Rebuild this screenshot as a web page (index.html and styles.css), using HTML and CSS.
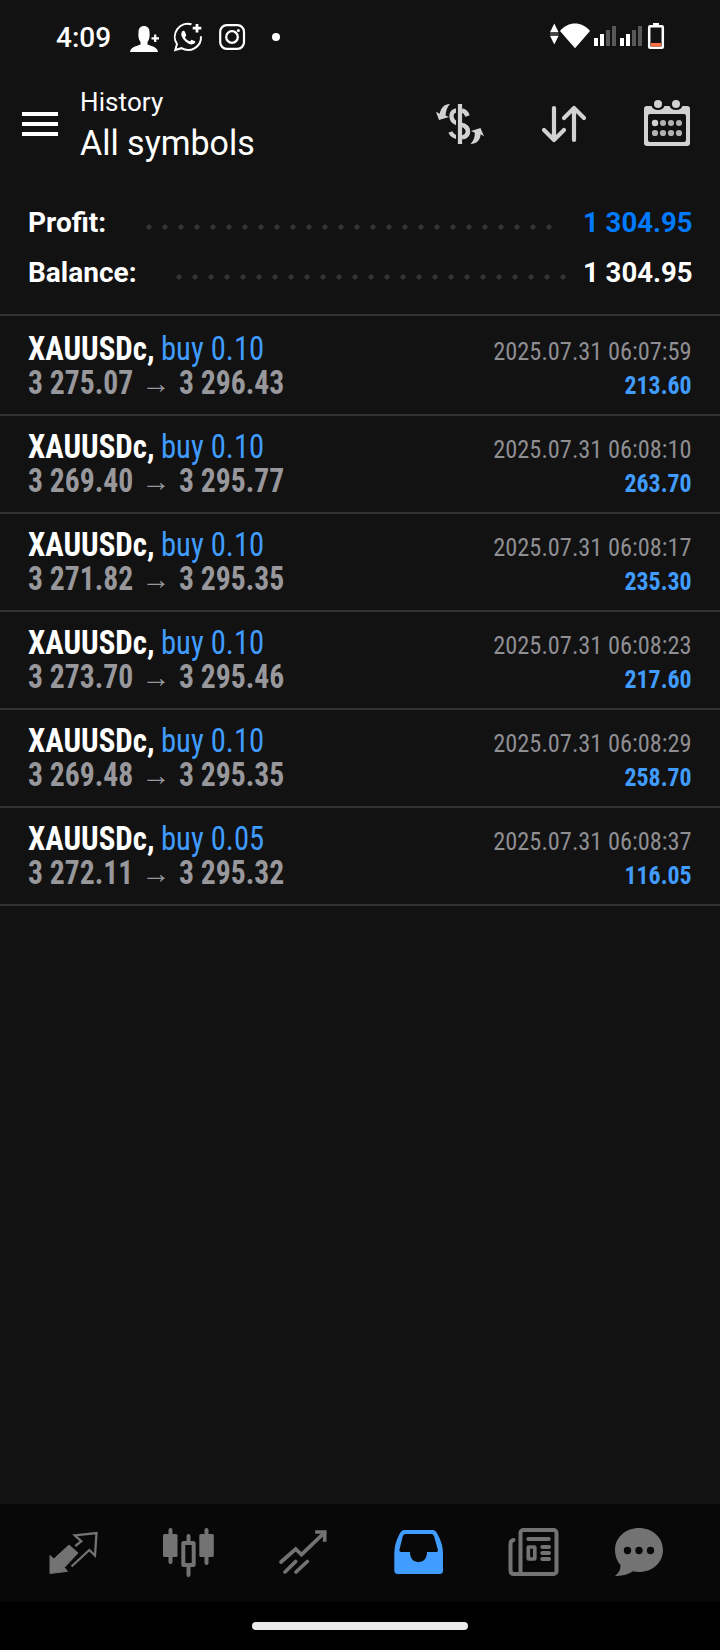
FILE: index.html
```
<!DOCTYPE html>
<html lang="en">
<head>
<meta charset="utf-8">
<title>History</title>
<link rel="stylesheet" href="styles.css">
</head>
<body>
<div class="screen">
  <div class="status">
    <span class="clock">4:09</span>
    <svg class="status-left" width="160" height="36" viewBox="126 19 160 36" fill="#fff">
      <path d="M130 52C130.500 47.500 135 46.500 140.500 44.500V42C138.500 39.500 138 36 138.500 32C138.500 28.500 140.500 26 144 26C147.500 26 149.500 28.500 149.500 32C150 36 149.500 39.500 147.500 42V44.500C153 46.500 157.500 47.500 158 52Z"/>
      <path d="M151.500 38.300H159M155.200 34.500V42" stroke="#fff" stroke-width="2.200"/>
      <path d="M191.500 24.300A13 13 0 0 0 177 44L175.300 50L181.500 48.200A13 13 0 0 0 201 36.200" fill="none" stroke="#fff" stroke-width="2"/>
      <path d="M197 24V32.500M192.700 28.200H201.300" stroke="#fff" stroke-width="2.800"/>
      <path d="M182 31.500Q184 30 185 32L186.200 35Q186.200 36 184.800 37.500Q186.800 40.500 190 41.500L191.500 39.700L195 41.300Q196 43 193 44Q190 45.500 185.500 41.500Q179.500 36 182 31.500Z"/>
      <rect x="220.200" y="25.200" width="23.800" height="23.600" rx="6.500" fill="none" stroke="#fff" stroke-width="2.200"/>
      <circle cx="232" cy="37" r="5.800" fill="none" stroke="#fff" stroke-width="2.300"/>
      <circle cx="238.400" cy="30.500" r="1.500"/>
      <circle cx="276" cy="37" r="4"/>
    </svg>
    <svg class="status-right" width="120" height="32" viewBox="547 20 120 32" fill="#fff">
      <path d="M554.300 23.500L558.600 32.300H550Z"/><path d="M550 35.700H558.600L554.300 44.500Z"/>
      <path d="M550 34H558.600" stroke="#777" stroke-width="1"/>
      <path d="M560 31C568 21 582 21 590 31L575 48.300Z"/>
      <path d="M594 38h4v8h-4zM600 34h4v12h-4zM620 38h4v8h-4zM626 34h4v12h-4z"/>
      <path d="M606 30h4v16h-4zM612 26h4v20h-4zM632 30h4v16h-4zM638 26h4v20h-4z" fill="#585858"/>
      <path d="M653 23h6v3h-6z"/><rect x="649.200" y="26.200" width="13.600" height="21.600" rx="1" fill="none" stroke="#fff" stroke-width="2.500"/>
      <path d="M651 43h10v3.500h-10z" fill="#ff6e42"/>
    </svg>
  </div>

  <header class="appbar">
    <div class="menu"><i></i><i></i><i></i></div>
    <div class="titles">
      <div class="kicker">History</div>
      <div class="title">All symbols</div>
    </div>
    <svg class="actions" width="260" height="52" viewBox="434 98 260 52" fill="#d2d2d2" stroke-linecap="round" stroke-linejoin="round">
      <g fill="none" stroke="#d2d2d2">
        <path d="M467.500 115.500C464.500 108.500 451.500 108 451.500 116C451.500 122 456 122.800 460 124.300C465 125.500 468 127.500 468 131.500C468 139.500 453.500 139.500 450.300 132" stroke-width="4.300" stroke-linecap="butt"/>
        <path d="M460 104V144" stroke="#121212" stroke-width="8" stroke-linecap="butt"/>
        <path d="M462 110.400Q466 111.500 467.500 116M461 124.600Q468 126 468 131.500Q467.500 136.500 462 137.500" stroke-width="4.300" stroke-linecap="butt"/>
        <path d="M460 104V144" stroke-width="4.200" stroke-linecap="butt"/>
        <path d="M554 108V140M544 130L554 140L564 130M574 140V108M564 118L574 108L584 118" stroke-width="4.200"/>
      </g>
      <path d="M450 104C444 104 441 108 439.700 113.800L436 111.700L439 120L449 117L445.500 115.400C446 111 447 107 450 104Z"/>
      <path d="M470.500 144C477 144 480 140 480.700 134.200L484 136.200L480.500 128L471 131L474.800 132.700C475 137 473.500 141 470.500 144Z"/>
      <path fill-rule="evenodd" d="M647 106H651.500Q653 110 658 110Q663 110 664.500 106H669.500Q671 110 676 110Q681 110 682.500 106H687Q690 106 690 109V143Q690 146 687 146H647Q644 146 644 143V109Q644 106 647 106ZM650 114Q648 114 648 116V140Q648 142 650 142H684Q686 142 686 140V116Q686 114 684 114Z"/>
      <circle cx="658" cy="104" r="4"/><circle cx="676" cy="104" r="4"/>
      <circle cx="655" cy="123" r="3.200"/>
      <g fill="#b2b2b2"><circle cx="663" cy="123" r="3"/><circle cx="671" cy="123" r="3"/><circle cx="679" cy="123" r="3"/><circle cx="655" cy="133" r="3.100"/><circle cx="663" cy="133" r="3.100"/><circle cx="671" cy="133" r="3.100"/><circle cx="679" cy="133" r="3.100"/></g>
    </svg>
  </header>

  <section class="summary">
    <div class="sum"><span>Profit:</span><i class="dots dots-profit"></i><b class="blue">1 304.95</b></div>
    <div class="sum"><span>Balance:</span><i class="dots dots-balance"></i><b>1 304.95</b></div>
  </section>

  <main class="deals">
    <div class="deal"><div class="line"><span class="sym">XAUUSDc,</span><span class="side">buy 0.10</span><span class="date">2025.07.31 06:07:59</span></div><div class="line"><span class="price">3 275.07</span><span class="arrow">→</span><span class="price">3 296.43</span><span class="gain">213.60</span></div></div>
    <div class="deal"><div class="line"><span class="sym">XAUUSDc,</span><span class="side">buy 0.10</span><span class="date">2025.07.31 06:08:10</span></div><div class="line"><span class="price">3 269.40</span><span class="arrow">→</span><span class="price">3 295.77</span><span class="gain">263.70</span></div></div>
    <div class="deal"><div class="line"><span class="sym">XAUUSDc,</span><span class="side">buy 0.10</span><span class="date">2025.07.31 06:08:17</span></div><div class="line"><span class="price">3 271.82</span><span class="arrow">→</span><span class="price">3 295.35</span><span class="gain">235.30</span></div></div>
    <div class="deal"><div class="line"><span class="sym">XAUUSDc,</span><span class="side">buy 0.10</span><span class="date">2025.07.31 06:08:23</span></div><div class="line"><span class="price">3 273.70</span><span class="arrow">→</span><span class="price">3 295.46</span><span class="gain">217.60</span></div></div>
    <div class="deal"><div class="line"><span class="sym">XAUUSDc,</span><span class="side">buy 0.10</span><span class="date">2025.07.31 06:08:29</span></div><div class="line"><span class="price">3 269.48</span><span class="arrow">→</span><span class="price">3 295.35</span><span class="gain">258.70</span></div></div>
    <div class="deal"><div class="line"><span class="sym">XAUUSDc,</span><span class="side">buy 0.05</span><span class="date">2025.07.31 06:08:37</span></div><div class="line"><span class="price">3 272.11</span><span class="arrow">→</span><span class="price">3 295.32</span><span class="gain">116.05</span></div></div>
  </main>

  <nav class="tabs">
    <svg viewBox="44 1524 59 58"><path fill="#737373" stroke="#737373" stroke-linejoin="round" d="M50 1555.500L53.800 1559L69 1545L78 1553L64.300 1567.500L67.500 1571.300L50 1573.500Z"/><path fill="none" stroke="#737373" stroke-width="2.300" d="M75.300 1546L81.300 1541.200L74.700 1535.300L96.500 1533L95 1555.500L89.300 1550L71.500 1566.500"/></svg>
    <svg viewBox="159 1524 59 58" fill="#737373"><rect x="163" y="1534" width="14.500" height="23" rx="1.500"/><rect x="199.300" y="1534" width="14.500" height="23" rx="1.500"/><path d="M170.500 1530V1562M206.500 1530V1563M188.500 1536V1542M188.500 1567V1575" stroke="#737373" stroke-width="4" stroke-linecap="round"/><rect x="183.300" y="1543" width="10.400" height="22" rx=".5" fill="none" stroke="#737373" stroke-width="4"/></svg>
    <svg viewBox="274 1524 59 58" fill="none" stroke="#737373" stroke-width="3.700" stroke-linecap="round"><path d="M281 1562L295.700 1549L301.500 1554.700L324.500 1532.500"/><path d="M317 1532H324.700V1540" stroke-linecap="square"/><path d="M285 1572L295.700 1561.500M296 1572L307.300 1561.500"/></svg>
    <svg viewBox="389 1524 59 58"><path fill="#409cff" fill-rule="evenodd" d="M404.500 1530H432.500Q435.500 1530 437.500 1534Q443 1544 443 1553V1570.500Q443 1574 439.500 1574H398Q394.300 1574 394.300 1570.500V1553Q394.300 1544 399.500 1534Q401.500 1530 404.500 1530ZM405.500 1534Q403.700 1534 402.800 1536L399.500 1549.500Q399 1552 401.500 1552H410C410 1558 413 1562 418.500 1562C424 1562 427 1558 427 1552H436Q438.500 1552 437.800 1549.500L434 1536Q433.200 1534 431.500 1534Z"/></svg>
    <svg viewBox="504 1524 59 58" fill="none" stroke="#737373" stroke-width="4" stroke-linecap="round"><rect x="520.500" y="1530" width="36" height="44" rx="3"/><path d="M513.500 1540Q510.500 1540.500 510.500 1544V1570Q510.500 1574 514 1574H524M528.300 1539H548.800M542.300 1547H549M542.300 1553H549M542.300 1559H549"/><rect x="528.300" y="1547" width="6.500" height="12" rx=".5" stroke-width="3.700"/></svg>
    <svg viewBox="610 1524 59 58"><path fill="#737373" d="M639 1528C652 1528 663 1537 663 1550C663 1563 652 1572 639 1572Q636 1572 633 1571.300Q625 1576.500 615 1575.800Q621 1571.500 620.500 1565Q615 1559 615 1550C615 1537 626 1528 639 1528Z"/><g fill="#080808"><circle cx="627.500" cy="1550.500" r="3.700"/><circle cx="639" cy="1550.500" r="3.700"/><circle cx="650.500" cy="1550.500" r="3.700"/></g></svg>
  </nav>
  <div class="gesture"><i></i></div>
</div>
</body>
</html>
```
FILE: styles.css
```
* { box-sizing: border-box; }
body { margin: 0; background: #121212; font-family: Roboto, sans-serif; color: #fff; }
.screen { width: 720px; height: 1650px; display: flex; flex-direction: column; overflow: hidden; }
svg { display: block; flex: none; }

.status { display: flex; height: 74px; padding-left: 56px; }
.clock { width: 70px; padding-top: 22px; font-size: 28px; line-height: 32px; font-weight: 500; }
.status-left { margin-top: 19px; }
.status-right { margin-top: 20px; margin-left: 261px; }

.appbar { display: flex; height: 116px; }
.menu { display: flex; flex-direction: column; gap: 6px; width: 58px; padding: 38px 0 0 22px; }
.menu i { width: 36px; height: 4px; background: #fff; }
.titles { width: 376px; padding: 12px 0 0 22px; white-space: nowrap; }
.kicker { font-size: 26px; line-height: 32px; letter-spacing: .1px; }
.title { font-size: 34.5px; line-height: 40px; margin-top: 5px; transform: scaleX(.985); transform-origin: left; }
.actions { margin-top: 24px; }

.summary { height: 126px; padding: 7px 28px 0; border-bottom: 2px solid #313131; }
.sum { display: flex; height: 50px; font-size: 28px; line-height: 52px; font-weight: 700; }
.sum b { margin-left: auto; white-space: nowrap; font-weight: 700; transform: scaleX(.982); transform-origin: right; }
.blue { color: #007aff; }
.dots { height: 6px; margin-top: 27px; background: radial-gradient(circle at 8px 3px, #333 2.300px, transparent 2.900px) 0 0 / 16px 6px repeat-x; }
.sum span { width: 113px; white-space: nowrap; }
.dots-profit { width: 416px; }
.sum:nth-child(2) span { width: 143px; }
.dots-balance { width: 400px; }

.deal { height: 98px; padding: 13px 28px 0; border-bottom: 2px solid #313131; font-family: "Roboto Condensed", Roboto, sans-serif; font-stretch: 75%; }
.deal:first-child { height: 100px; padding-top: 15px; }
.line { display: flex; align-items: baseline; height: 34px; line-height: 36px; white-space: nowrap; font-size: 32.5px; }
.line span { transform-origin: left; }
.sym { font-weight: 700; width: 133px; transform: scaleX(.95); }
.side { color: #409cff; transform: scaleX(.943); }
.line .date { margin-left: auto; font-size: 26.5px; color: #8e8e93; transform: scaleX(.92); transform-origin: right; }
.price { width: 113px; font-weight: 700; color: #97979c; transform: scaleX(.912); }
.arrow { width: 30px; margin-right: 8px; text-align: center; color: #97979c; font: 700 29px/36px "Liberation Sans", sans-serif; transform: translateY(-1px); }
.line .gain { margin-left: auto; font-size: 26.5px; font-weight: 700; color: #409cff; transform: scaleX(.9); transform-origin: right; }

.tabs { display: grid; grid-template-columns: repeat(5, 115px) 97px; justify-items: center; height: 98px; margin-top: auto; padding: 20px 0 0 16px; background: #080808; }
.tabs svg { width: 59px; height: 58px; }
.gesture { height: 48px; padding-top: 20px; background: #000; }
.gesture i { display: block; width: 216px; height: 8px; margin: 0 auto; border-radius: 4px; background: #ebebeb; }
```
